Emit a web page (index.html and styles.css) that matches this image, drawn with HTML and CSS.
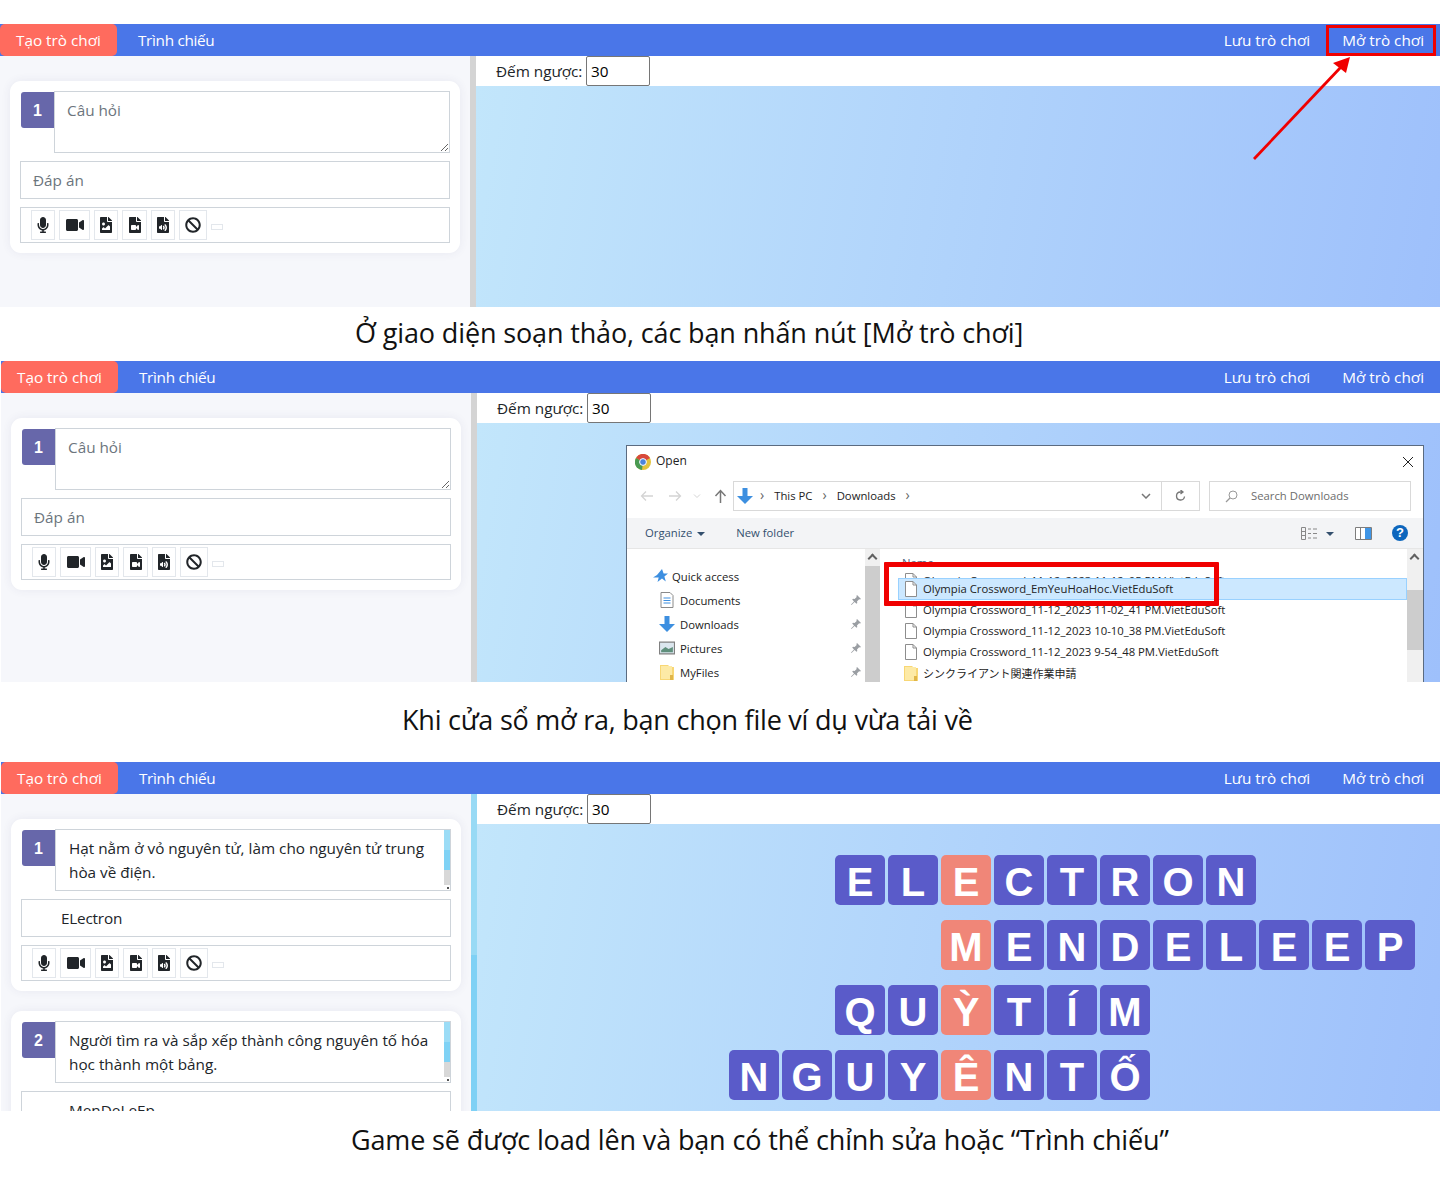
FILE: index.html
```html
<!DOCTYPE html>
<html>
  <head>
    <title>Olympia Crossword</title>
    <link rel="stylesheet" href="styles.css">
  </head>
  <body>
    <svg class="icon-defs" xmlns="http://www.w3.org/2000/svg">
      <symbol id="i-mic" viewBox="0 0 352 512"><path d="M176 352c53.02 0 96-42.98 96-96V96c0-53.02-42.98-96-96-96S80 42.98 80 96v160c0 53.02 42.98 96 96 96zm160-160h-16c-8.84 0-16 7.16-16 16v48c0 74.8-64.49 134.82-140.79 127.38C96.71 376.89 48 317.11 48 250.3V208c0-8.84-7.16-16-16-16H16c-8.84 0-16 7.16-16 16v40.16c0 89.64 63.97 169.55 152 181.69V464H96c-8.84 0-16 7.16-16 16v16c0 8.84 7.16 16 16 16h160c8.84 0 16-7.16 16-16v-16c0-8.84-7.16-16-16-16h-56v-33.77C285.71 418.47 352 344.9 352 256v-48c0-8.84-7.16-16-16-16z"/></symbol>
      <symbol id="i-video" viewBox="0 0 576 512"><path d="M336.2 64H47.8C21.4 64 0 85.4 0 111.8v288.4C0 426.6 21.4 448 47.8 448h288.4c26.4 0 47.8-21.4 47.8-47.8V111.8c0-26.4-21.4-47.8-47.8-47.8zm189.4 37.7L416 177.3v157.4l109.6 75.5c21.2 14.6 50.4-.3 50.4-25.8V127.5c0-25.4-29.1-40.4-50.4-25.8z"/></symbol>
      <symbol id="i-image" viewBox="0 0 384 512"><path d="M384 121.941V128H256V0h6.059a24 24 0 0 1 16.97 7.029l97.941 97.941a24.002 24.002 0 0 1 7.03 16.971zM248 160c-13.2 0-24-10.8-24-24V0H24C10.745 0 0 10.745 0 24v464c0 13.255 10.745 24 24 24h336c13.255 0 24-10.745 24-24V160H248zm-135.455 16c26.51 0 48 21.49 48 48s-21.49 48-48 48-48-21.49-48-48 21.491-48 48-48zm208 240h-256l.485-48.485L104.545 328c4.686-4.686 11.799-4.201 16.485.485L160.545 368 264.06 264.485c4.686-4.686 12.284-4.686 16.971 0L320.545 304v112z"/></symbol>
      <symbol id="i-film" viewBox="0 0 384 512"><path d="M384 121.941V128H256V0h6.059c6.365 0 12.47 2.529 16.971 7.029l97.941 97.941A24.005 24.005 0 0 1 384 121.941zM224 136V0H24C10.745 0 0 10.745 0 24v464c0 13.255 10.745 24 24 24h336c13.255 0 24-10.745 24-24V160H248c-13.2 0-24-10.8-24-24zm96 144.016v111.963c0 21.445-25.943 31.998-40.971 16.971L224 353.941V392c0 13.255-10.745 24-24 24H88c-13.255 0-24-10.745-24-24V280c0-13.255 10.745-24 24-24h112c13.255 0 24 10.745 24 24v38.059l55.029-55.013c15.011-15.01 40.971-4.491 40.971 16.97z"/></symbol>
      <symbol id="i-audio" viewBox="0 0 384 512"><path d="M224 136V0H24C10.7 0 0 10.7 0 24v464c0 13.3 10.7 24 24 24h336c13.3 0 24-10.7 24-24V160H248c-13.2 0-24-10.8-24-24zm-64 268c0 10.7-12.9 16-20.5 8.5L104 376H76c-6.6 0-12-5.4-12-12v-56c0-6.6 5.4-12 12-12h28l35.5-36.5c7.6-7.6 20.5-2.2 20.5 8.5v136zm33.2-47.6c9.1-9.3 9.1-24.1 0-33.4-22.1-22.8 12.2-56.2 34.4-33.5 27.2 27.9 27.2 72.4 0 100.4-21.8 22.3-56.9-10.4-34.4-33.5zm86-117.1c54.4 55.9 54.4 144.8 0 200.8-21.8 22.4-57-10.3-34.4-33.5 36.2-37.2 36.3-96.5 0-133.8-22.1-22.8 12.3-56.3 34.4-33.5zM384 121.9v6.1H256V0h6.1c6.4 0 12.5 2.5 17 7l97.9 98c4.5 4.5 7 10.6 7 16.9z"/></symbol>
      <symbol id="i-ban" viewBox="0 0 512 512"><path d="M256 8C119.034 8 8 119.033 8 256s111.034 248 248 248 248-111.034 248-248S392.967 8 256 8zm130.108 117.892c65.448 65.448 70 165.481 20.677 235.637L150.47 105.216c70.204-49.356 170.226-44.735 235.638 20.676zM125.892 386.108c-65.448-65.448-70-165.481-20.677-235.637L361.53 406.784c-70.203 49.356-170.226 44.736-235.638-20.676z"/></symbol>
      <symbol id="i-pin" viewBox="0 0 12 12"><path d="M7 1l4 4-1 .6-.9-.3L7 7.4l.3 1.6-.8.8L4.6 8 1.5 11 1 10.5 4 7.4 2.2 5.5l.8-.8 1.6.3 2.1-2.1-.3-.9z" fill="#9a9ea3"/></symbol>
      <symbol id="i-file" viewBox="0 0 12 16"><path d="M.5.5H8l3.500 3.500v11.500h-11z" fill="#fff" stroke="#8d8d8d"/><path d="M8 .5V4h3.500" fill="none" stroke="#8d8d8d"/></symbol>
      <symbol id="i-folder" viewBox="0 0 14 16"><path d="M0 1h8l2 2h4v13H0z" fill="#f8d775"/><path d="M1 2h11v13H1z" fill="#fdeaa6"/><path d="M10 11h3v5h-3z" fill="#e0b64a"/></symbol>
      <symbol id="i-down" viewBox="0 0 16 16"><path d="M5.5 0h5v8H16l-8 8-8-8h5.500z" fill="#3d8fe0"/></symbol>
    </svg>

    <!-- buoc 1 -->
    <section class="screen screen-one">
      <nav class="topbar">
        <a class="tab tab-active">Tạo trò chơi</a>
        <a class="tab tab-show">Trình chiếu</a>
        <a class="tab tab-save">Lưu trò chơi</a>
        <a class="tab">Mở trò chơi</a>
      </nav>
      <div class="work">
        <aside class="sidebar">
          <div class="card">
            <div class="question">
              <span class="num">1</span>
              <textarea class="ask" placeholder="Câu hỏi"></textarea>
            </div>
            <input class="answer" placeholder="Đáp án">
            <div class="tools">
              <button class="tool t-mic"><svg><use href="#i-mic"/></svg></button>
              <button class="tool t-video"><svg><use href="#i-video"/></svg></button>
              <button class="tool t-file"><svg><use href="#i-image"/></svg></button>
              <button class="tool t-file t-film"><svg><use href="#i-film"/></svg></button>
              <button class="tool t-file"><svg><use href="#i-audio"/></svg></button>
              <button class="tool t-ban"><svg><use href="#i-ban"/></svg></button>
              <button class="tool-empty"></button>
            </div>
          </div>
        </aside>
        <main class="stage">
          <div class="timer"><label>Đếm ngược:</label><input value="30"></div>
          <div class="board"></div>
        </main>
      </div>
      <div class="mark mark-open"></div>
      <svg class="arrow" width="110" height="110" viewBox="0 0 110 110">
        <path d="M4 107L91 15" stroke="#f00000" stroke-width="2.8" fill="none"/>
        <path d="M100 5L96 21 83 11z" fill="#f00000"/>
      </svg>
    </section>
    <p class="caption cap-one">Ở giao diện soạn thảo, các bạn nhấn nút [Mở trò chơi]</p>

    <!-- buoc 2 -->
    <section class="screen screen-two">
      <nav class="topbar">
        <a class="tab tab-active">Tạo trò chơi</a>
        <a class="tab tab-show">Trình chiếu</a>
        <a class="tab tab-save">Lưu trò chơi</a>
        <a class="tab">Mở trò chơi</a>
      </nav>
      <div class="work">
        <aside class="sidebar">
          <div class="card">
            <div class="question">
              <span class="num">1</span>
              <textarea class="ask" placeholder="Câu hỏi"></textarea>
            </div>
            <input class="answer" placeholder="Đáp án">
            <div class="tools">
              <button class="tool t-mic"><svg><use href="#i-mic"/></svg></button>
              <button class="tool t-video"><svg><use href="#i-video"/></svg></button>
              <button class="tool t-file"><svg><use href="#i-image"/></svg></button>
              <button class="tool t-file t-film"><svg><use href="#i-film"/></svg></button>
              <button class="tool t-file"><svg><use href="#i-audio"/></svg></button>
              <button class="tool t-ban"><svg><use href="#i-ban"/></svg></button>
              <button class="tool-empty"></button>
            </div>
          </div>
        </aside>
        <main class="stage">
          <div class="timer"><label>Đếm ngược:</label><input value="30"></div>
          <div class="board"></div>
        </main>
      </div>

      <div class="dialog">
        <div class="dlg-title">
          <svg class="chrome" width="16" height="16" viewBox="0 0 16 16">
            <circle cx="8" cy="8" r="8" fill="#e2c33c"/>
            <path d="M8 8L1 4a8 8 0 0 1 14 0z" fill="#d8493c"/>
            <path d="M8 8L1 4a8 8 0 0 0 6 12z" fill="#4a9a52"/>
            <circle cx="8" cy="8" r="3.4" fill="#4a84dc" stroke="#fff"/>
          </svg>
          <span class="dlg-name">Open</span>
          <svg class="dlg-close" width="12" height="12" viewBox="0 0 12 12"><path d="M1 1l10 10M11 1L1 11" stroke="#222" fill="none"/></svg>
        </div>
        <div class="dlg-address">
          <span class="nav-arrows">
            <svg width="14" height="12" viewBox="0 0 14 12"><path d="M13 6H2M6 1.5L1.5 6 6 10.5" stroke="#d4d4d4" stroke-width="1.3" fill="none"/></svg>
            <svg width="14" height="12" viewBox="0 0 14 12"><path d="M1 6h11M8 1.5L12.5 6 8 10.5" stroke="#d4d4d4" stroke-width="1.3" fill="none"/></svg>
            <svg width="8" height="6" viewBox="0 0 8 6"><path d="M1 1.5L4 4.5 7 1.5" stroke="#d4d4d4" fill="none"/></svg>
            <svg width="13" height="14" viewBox="0 0 13 14"><path d="M6.5 14V2M1.5 7l5-5.500 5 5.500" stroke="#777" stroke-width="1.5" fill="none"/></svg>
          </span>
          <div class="path-box">
            <svg width="16" height="16"><use href="#i-down"/></svg>
            <span class="crumb-sep">›</span><span class="crumb">This PC</span><span class="crumb-sep">›</span><span class="crumb">Downloads</span><span class="crumb-sep">›</span>
            <span class="path-end">
              <svg width="10" height="6" viewBox="0 0 10 6"><path d="M1 1l4 4 4-4" stroke="#777" stroke-width="1.5" fill="none"/></svg>
            </span>
            <span class="path-refresh">
              <svg width="11" height="12" viewBox="0 0 11 12"><path d="M9.5 6.5a4 4 0 1 1-4-4.500H7M5.500 0L8 2 5.500 4" stroke="#777" stroke-width="1.3" fill="none"/></svg>
            </span>
          </div>
          <div class="search-box">
            <svg width="13" height="13" viewBox="0 0 13 13"><circle cx="8" cy="5" r="4" stroke="#999" fill="none"/><path d="M5 8L1 12" stroke="#999" stroke-width="1.3"/></svg>
            <span class="crumb">Search Downloads</span>
          </div>
        </div>
        <div class="dlg-command">
          <span class="cmd-organize">Organize</span><i class="caret"></i>
          <span class="cmd-new">New folder</span>
          <svg class="cmd-view" width="17" height="13" viewBox="0 0 17 13"><path d="M.5.5h4v12h-4zM.5 4.5h4M.5 8.5h4" stroke="#888" fill="none"/><path d="M7 2h3M7 6.5h3M7 11h3M12 2h4M12 6.5h4M12 11h4" stroke="#888"/></svg>
          <i class="caret caret-dark"></i>
          <svg class="cmd-pane" width="17" height="13" viewBox="0 0 17 13"><path d="M.5.5h16v12H.5z" fill="#fff" stroke="#7d7d7d"/><path d="M10 1h6v11h-6z" fill="#3f95e6"/><path d="M5.5 1v11" stroke="#7d7d7d"/></svg>
          <span class="cmd-help">?</span>
        </div>
        <div class="dlg-body">
          <div class="tree">
            <div class="tree-item tree-quick">
              <svg viewBox="0 0 15 14"><path d="M9 0l1.6 4.500H15l-3.600 3 1.400 5-3.800-3L4.500 13l1.200-4.500H0l4-2.500z" fill="#3d8fe0"/></svg>
              Quick access
            </div>
            <div class="tree-item">
              <svg viewBox="0 0 13 16"><path d="M.5.5h9l3 3v12H.5z" fill="#fff" stroke="#8a8a8a"/><path d="M3 6h7M3 8.500h7M3 11h7" stroke="#3d8fe0"/></svg>
              Documents<svg class="pin"><use href="#i-pin"/></svg>
            </div>
            <div class="tree-item">
              <svg><use href="#i-down"/></svg>
              Downloads<svg class="pin"><use href="#i-pin"/></svg>
            </div>
            <div class="tree-item">
              <svg viewBox="0 0 15 12"><path d="M.5.5h14v11H.5z" fill="#dbe6ee" stroke="#808080"/><path d="M2 8l4-3 3 2 4-2v5H2z" fill="#5f8f7c"/></svg>
              Pictures<svg class="pin"><use href="#i-pin"/></svg>
            </div>
            <div class="tree-item">
              <svg><use href="#i-folder"/></svg>
              MyFiles<svg class="pin"><use href="#i-pin"/></svg>
            </div>
          </div>
          <div class="scroll-left"><span class="scroll-up"></span><span class="scroll-thumb"></span></div>
          <div class="files">
            <div class="files-head">Name</div>
            <div class="file file-cut"><svg width="12" height="16"><use href="#i-file"/></svg>Olympia Crossword_11-12_2023 11-12_05 PM.VietEduSoft</div>
            <div class="file file-on"><svg width="12" height="16"><use href="#i-file"/></svg>Olympia Crossword_EmYeuHoaHoc.VietEduSoft</div>
            <div class="file"><svg width="12" height="16"><use href="#i-file"/></svg>Olympia Crossword_11-12_2023 11-02_41 PM.VietEduSoft</div>
            <div class="file"><svg width="12" height="16"><use href="#i-file"/></svg>Olympia Crossword_11-12_2023 10-10_38 PM.VietEduSoft</div>
            <div class="file"><svg width="12" height="16"><use href="#i-file"/></svg>Olympia Crossword_11-12_2023 9-54_48 PM.VietEduSoft</div>
            <div class="file file-jp"><svg width="14" height="16"><use href="#i-folder"/></svg>シンクライアント関連作業申請</div>
          </div>
          <div class="scroll-right"><span class="scroll-up"></span><span class="scroll-thumb"></span></div>
        </div>
      </div>
      <div class="mark mark-file"></div>
    </section>
    <p class="caption cap-two">Khi cửa sổ mở ra, bạn chọn file ví dụ vừa tải về</p>

    <!-- buoc 3 -->
    <section class="screen screen-three">
      <nav class="topbar">
        <a class="tab tab-active">Tạo trò chơi</a>
        <a class="tab tab-show">Trình chiếu</a>
        <a class="tab tab-save">Lưu trò chơi</a>
        <a class="tab">Mở trò chơi</a>
      </nav>
      <div class="work">
        <aside class="sidebar sidebar-loaded">
          <div class="card">
            <div class="question">
              <span class="num">1</span>
              <textarea class="ask ask-filled">Hạt nằm ở vỏ nguyên tử, làm cho nguyên tử trung hòa về điện.</textarea>
            </div>
            <input class="answer answer-filled" value="ELectron">
            <div class="tools">
              <button class="tool t-mic"><svg><use href="#i-mic"/></svg></button>
              <button class="tool t-video"><svg><use href="#i-video"/></svg></button>
              <button class="tool t-file"><svg><use href="#i-image"/></svg></button>
              <button class="tool t-file t-film"><svg><use href="#i-film"/></svg></button>
              <button class="tool t-file"><svg><use href="#i-audio"/></svg></button>
              <button class="tool t-ban"><svg><use href="#i-ban"/></svg></button>
              <button class="tool-empty"></button>
            </div>
          </div>
          <div class="card">
            <div class="question">
              <span class="num">2</span>
              <textarea class="ask ask-filled">Người tìm ra và sắp xếp thành công nguyên tố hóa học thành một bảng.</textarea>
            </div>
            <input class="answer answer-second" value="MenDeLeEp">
          </div>
        </aside>
        <main class="stage">
          <div class="timer"><label>Đếm ngược:</label><input value="30"></div>
          <div class="board board-game">
            <div class="word">
              <span class="gap"></span><span class="gap"></span>
              <span class="cell">E</span><span class="cell">L</span><span class="cell key">E</span><span class="cell">C</span><span class="cell">T</span><span class="cell">R</span><span class="cell">O</span><span class="cell">N</span>
            </div>
            <div class="word">
              <span class="gap"></span><span class="gap"></span><span class="gap"></span><span class="gap"></span>
              <span class="cell key">M</span><span class="cell">E</span><span class="cell">N</span><span class="cell">D</span><span class="cell">E</span><span class="cell">L</span><span class="cell">E</span><span class="cell">E</span><span class="cell">P</span>
            </div>
            <div class="word">
              <span class="gap"></span><span class="gap"></span>
              <span class="cell">Q</span><span class="cell">U</span><span class="cell key">Ỳ</span><span class="cell">T</span><span class="cell">Í</span><span class="cell">M</span>
            </div>
            <div class="word">
              <span class="cell">N</span><span class="cell">G</span><span class="cell">U</span><span class="cell">Y</span><span class="cell key">Ê</span><span class="cell">N</span><span class="cell">T</span><span class="cell">Ố</span>
            </div>
          </div>
        </main>
      </div>
    </section>
    <p class="caption cap-three">Game sẽ được load lên và bạn có thể chỉnh sửa hoặc “Trình chiếu”</p>
  </body>
</html>
```

FILE: styles.css
```css
body { margin: 0; padding-top: 24px; background: #fff; color: #212529; font-family: "Open Sans", "Noto Sans", sans-serif; font-size: 15.3px; }

.icon-defs { position: absolute; width: 0; height: 0; }

.screen { position: relative; overflow: hidden; display: flex; flex-direction: column; }
.screen-one { height: 283px; }
.screen-two { height: 321px; margin-left: 1px; }
.screen-three { height: 349px; margin-left: 1px; }

.caption { margin: 0; box-sizing: border-box; color: #111; font-size: 27px; letter-spacing: -0.14px; white-space: nowrap; display: flex; align-items: center; }
.cap-one { height: 54px; padding-left: 355px; padding-bottom: 3px; }
.cap-two { height: 80px; padding-left: 402px; padding-bottom: 5px; letter-spacing: -0.23px; }
.cap-three { height: 58px; padding-left: 351px; padding-bottom: 2px; }

/* thanh tren */
.topbar { flex: none; display: flex; height: 32px; background: #4a76e8; color: #fff; }
.tab { padding: 0 16px; line-height: 33px; white-space: nowrap; }
.tab-active { background: #ff6b5e; border-radius: 5px; }
.tab-show { margin-left: 5px; letter-spacing: -0.3px; }
.tab-save { margin-left: auto; }

.work { flex: 1; display: flex; min-height: 0; }
.sidebar { flex: none; width: 476px; box-sizing: border-box; padding: 25px 10px 0 10px; background: #f6f7fb; border-right: 6px solid #d4d4d4; }
.sidebar-loaded { border-image: linear-gradient(#98daf5 0 161px, #7fd1f5 161px) 1; }

.card { background: #fff; border-radius: 11px; padding: 10px; margin-bottom: 20px; box-shadow: 0 0 10px rgba(60, 70, 110, 0.08); }
.question { display: flex; align-items: flex-start; }
.num { flex: none; width: 33px; height: 36px; margin: 1px 0 0 1px; background: #6767aa; border-radius: 3px 0 0 3px; color: #fff; font-family: "Liberation Sans", sans-serif; font-weight: bold; font-size: 16px; line-height: 38px; text-align: center; }
.ask { flex: 1; min-width: 0; height: 62px; box-sizing: border-box; padding: 6px 12px; border: 1px solid #ced4da; border-radius: 0; font: inherit; line-height: 24px; color: #212529; outline: none; overflow: hidden; }
.ask-filled { resize: none; padding: 6px 14px 6px 13px; background: linear-gradient(#555, #555) right 1px bottom 1px / 2px 2px no-repeat, linear-gradient(#9bdcf6 0 20px, #7fd2f5 20px 40px, #d8d8d8 40px 55px, #fff 55px) right top / 6px 100% no-repeat, #fff; }
.ask::placeholder, .answer::placeholder { color: #6c757d; opacity: 1; }
.answer { display: block; width: 100%; height: 38px; box-sizing: border-box; margin-top: 8px; padding: 0 12px; border: 1px solid #ced4da; font: inherit; color: #212529; outline: none; }
.answer-filled { padding-left: 39px; letter-spacing: -0.2px; }
.answer-second { padding-left: 47px; }

.tools { display: flex; align-items: center; gap: 4px; height: 36px; box-sizing: border-box; margin-top: 8px; padding-left: 10px; border: 1px solid #ced4da; }
.tool { display: flex; align-items: center; justify-content: center; height: 30px; padding: 0; border: 1px solid #e3e7ec; background: #fff; color: #212529; }
.tool svg { fill: #212529; height: 16px; }
.t-mic, .t-file { width: 24px; }
.t-mic svg { width: 12px; }
.t-file svg { width: 12px; }
.t-film { width: 25px; }
.t-video { width: 31px; }
.t-video svg { width: 18px; }
.t-ban { width: 28px; }
.t-ban svg { width: 16px; }
.tool-empty { width: 12px; height: 6px; padding: 0; margin-top: 4px; border: 1px solid #e3e7ec; background: #fff; }

.stage { flex: 1; min-width: 0; display: flex; flex-direction: column; background: #fff; }
.timer { flex: none; display: flex; align-items: center; height: 30px; padding-left: 20px; }
.timer label { width: 90px; }
.timer input { width: 64px; height: 30px; box-sizing: border-box; padding: 0 4px; border: 1px solid #767676; border-radius: 2px; font: inherit; color: #000; }
.board { flex: 1; min-height: 0; background: linear-gradient(100deg, #c2e6fb, #9ec0fb); }

/* o chu */
.board-game { padding: 31px 0 0 252px; box-sizing: border-box; }
.word { display: flex; gap: 3px; margin-bottom: 15px; }
.gap { width: 50px; flex: none; }
.cell { flex: none; width: 50px; height: 50px; background: #5a5bc9; border-radius: 5px; color: #fff; font-family: "Liberation Sans", sans-serif; font-weight: bold; font-size: 40px; line-height: 54px; text-align: center; }
.cell.key { background: #f08678; }

/* khung do + mui ten */
.mark { position: absolute; box-sizing: border-box; border: 3px solid #f00000; }
.mark-open { left: 1326px; top: 1px; width: 110px; height: 31px; }
.mark-file { left: 883px; top: 201px; width: 335px; height: 44px; border-width: 5px; border-radius: 1px; }
.arrow { position: absolute; left: 1250px; top: 28px; }

/* hop thoai open */
.dialog { position: absolute; left: 625px; top: 84px; width: 798px; height: 300px; box-sizing: border-box; background: #fff; border: 1px solid #5b6b80; font-size: 11.3px; color: #222; }
.dlg-title { display: flex; align-items: center; gap: 5px; height: 32px; padding: 0 8px; font-size: 12px; }
.dlg-name { padding-bottom: 3px; }
.dlg-close { margin-left: auto; margin-right: 1px; }
.dlg-address { display: flex; align-items: center; height: 30px; margin-top: 3px; }
.nav-arrows { display: flex; align-items: center; width: 106px; padding-left: 13px; box-sizing: border-box; gap: 14px; }
.nav-arrows svg:nth-child(3) { margin-left: -3px; }
.nav-arrows svg:nth-child(4) { margin-left: -1px; }
.path-box { display: flex; align-items: center; gap: 10px; width: 467px; height: 30px; box-sizing: border-box; padding-left: 3px; border: 1px solid #d9d9d9; }
.path-box > svg { margin-right: -3px; }
.crumb { padding-bottom: 2px; }
.crumb-sep { color: #666; font-size: 14px; padding-bottom: 3px; }
.path-end { margin-left: auto; display: flex; }
.path-refresh { display: flex; align-items: center; justify-content: center; width: 37px; height: 100%; border-left: 1px solid #d9d9d9; }
.search-box { display: flex; align-items: center; gap: 13px; width: 202px; height: 30px; box-sizing: border-box; margin-left: 9px; padding-left: 15px; border: 1px solid #d9d9d9; color: #6d6d6d; }
.dlg-command { display: flex; align-items: center; height: 30px; margin-top: 7px; background: #f3f4f6; border-bottom: 1px solid #e6e6e6; color: #34506e; }
.cmd-organize { margin-left: 18px; padding-bottom: 2px; }
.caret { width: 0; height: 0; margin: 1px 0 0 5px; border: 4px solid transparent; border-top-color: #34506e; border-bottom: none; }
.cmd-new { margin-left: 31px; padding-bottom: 2px; }
.cmd-view { margin-left: auto; }
.caret-dark { margin-left: 8px; }
.cmd-pane { margin-left: 21px; }
.cmd-help { width: 16px; height: 16px; margin: 0 15px 0 20px; border-radius: 50%; background: #0d66bd; color: #fff; font-family: "Liberation Sans", sans-serif; font-weight: bold; font-size: 13px; line-height: 16px; text-align: center; }

.dlg-body { display: flex; height: 200px; }
.tree { width: 238px; flex: none; padding-top: 15px; box-sizing: border-box; }
.tree-item { position: relative; display: flex; align-items: center; gap: 5px; height: 24px; padding-left: 32px; }
.tree-item > svg:first-child { flex: none; width: 16px; height: 16px; }
.tree-quick { padding-left: 26px; gap: 4px; }
.tree-quick > svg:first-child { width: 15px; height: 14px; }
.pin { position: absolute; left: 223px; top: 6px; width: 12px; height: 12px; }
.scroll-left { width: 15px; flex: none; display: flex; flex-direction: column; background: #f0f0f0; }
.scroll-right { width: 16px; flex: none; display: flex; flex-direction: column; background: #f0f0f0; }
.scroll-up { height: 17px; flex: none; position: relative; }
.scroll-up::after { content: ""; position: absolute; left: 4px; top: 6px; width: 5px; height: 5px; border-top: 2px solid #606060; border-left: 2px solid #606060; transform: rotate(45deg); }
.scroll-left .scroll-thumb { flex: 1; background: #cdcdcd; }
.scroll-right .scroll-thumb { height: 60px; margin-top: 24px; background: #cdcdcd; }
.files { flex: 1; min-width: 0; padding-left: 18px; overflow: hidden; }
.files-head { height: 16px; padding-left: 4px; line-height: 28px; color: #4c607a; overflow: hidden; }
.file { display: flex; align-items: center; gap: 6px; height: 21px; padding: 0 0 2px 7px; box-sizing: border-box; white-space: nowrap; font-family: "Open Sans", "Noto Sans CJK JP", sans-serif; }
.file-cut { height: 13px; padding-top: 8px; align-items: flex-start; overflow: hidden; }
.file-on { height: 22px; background: #cce8ff; border: 1px solid #99d1ff; padding: 0 0 1px 6px; }
.file-jp { font-size: 11px; gap: 5px; padding-left: 6px; }
```
